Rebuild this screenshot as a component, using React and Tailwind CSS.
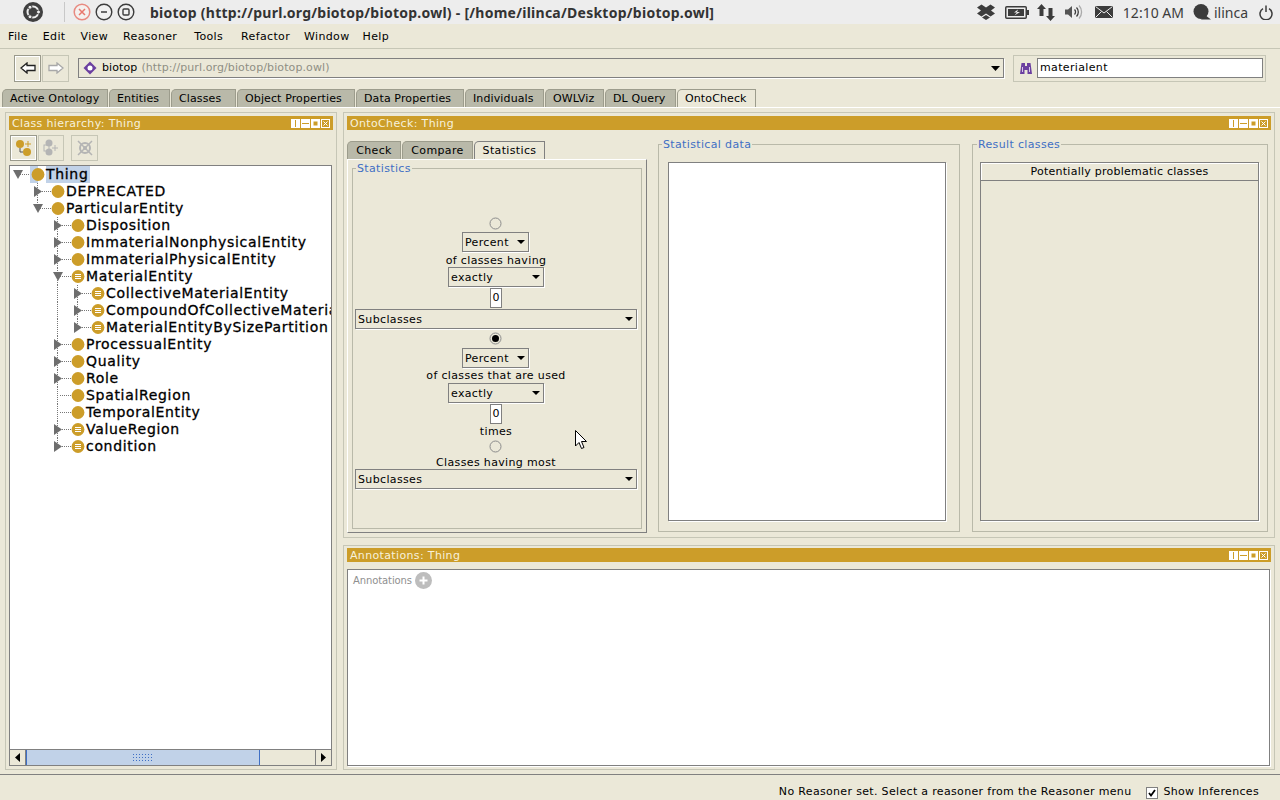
import React from 'react';

const MENUS = [
  { name: 'File', cls: '' },
  { name: 'Edit', cls: '' },
  { name: 'View', cls: '' },
  { name: 'Reasoner', cls: '' },
  { name: 'Tools', cls: 'ml-[2px]' },
  { name: 'Refactor', cls: 'ml-[3px]' },
  { name: 'Window', cls: '-ml-px' },
  { name: 'Help', cls: '-ml-[2px]' },
];

const TABS = [
  { name: 'Active Ontology', width: 'w-[106px]' },
  { name: 'Entities', width: 'w-[61px]' },
  { name: 'Classes', width: 'w-[65px]' },
  { name: 'Object Properties', width: 'w-[118px]' },
  { name: 'Data Properties', width: 'w-[108px]' },
  { name: 'Individuals', width: 'w-[79px]' },
  { name: 'OWLViz', width: 'w-[59px]' },
  { name: 'DL Query', width: 'w-[71px]' },
  { name: 'OntoCheck', width: 'w-[79px]', active: true },
];

// depth, arrow (down/right/none), defined class?, guides [x, half]
const TREE = [
  { name: 'Thing', d: 0, arrow: 'down', selected: true, guides: [] },
  { name: 'DEPRECATED', d: 1, arrow: 'right', guides: [[27]] },
  { name: 'ParticularEntity', d: 1, arrow: 'down', guides: [[27, true]] },
  { name: 'Disposition', d: 2, arrow: 'right', guides: [[47]] },
  { name: 'ImmaterialNonphysicalEntity', d: 2, arrow: 'right', guides: [[47]] },
  { name: 'ImmaterialPhysicalEntity', d: 2, arrow: 'right', guides: [[47]] },
  { name: 'MaterialEntity', d: 2, arrow: 'down', defined: true, guides: [[47]] },
  { name: 'CollectiveMaterialEntity', d: 3, arrow: 'right', defined: true, guides: [[47], [67]] },
  { name: 'CompoundOfCollectiveMaterialEntity', d: 3, arrow: 'right', defined: true, guides: [[47], [67]] },
  { name: 'MaterialEntityBySizePartition', d: 3, arrow: 'right', defined: true, guides: [[47], [67, true]] },
  { name: 'ProcessualEntity', d: 2, arrow: 'right', guides: [[47]] },
  { name: 'Quality', d: 2, arrow: 'right', guides: [[47]] },
  { name: 'Role', d: 2, arrow: 'right', guides: [[47]] },
  { name: 'SpatialRegion', d: 2, guides: [[47]] },
  { name: 'TemporalEntity', d: 2, guides: [[47]] },
  { name: 'ValueRegion', d: 2, arrow: 'right', defined: true, guides: [[47]] },
  { name: 'condition', d: 2, arrow: 'right', defined: true, guides: [[47, true]] },
];

function TreeRow({ row }) {
  const ax = 8 + 20 * row.d;
  const cx = 28 + 20 * row.d;
  return (
    <div className="flex h-[17px] items-center whitespace-nowrap">
      <svg width={36 + 20 * row.d} height="17" className="shrink-0">
        {row.guides.map(([x, half]) => (
          <line key={x} x1={x + 0.5} x2={x + 0.5} y1="0" y2={half ? 8 : 17} stroke="#777" strokeDasharray="1 1" />
        ))}
        <line x1={ax + 2} x2={cx - 5} y1="8.5" y2="8.5" stroke="#777" strokeDasharray="1 1" />
        {row.arrow === 'right' && <path d={`M${ax - 4} 3 L${ax + 4} 8.5 L${ax - 4} 14 Z`} fill="#6e6e6e" />}
        {row.arrow === 'down' && <path d={`M${ax - 5} 4 L${ax + 5} 4 L${ax} 13 Z`} fill="#6e6e6e" />}
        {row.selected && <rect x={cx - 8} y="0" width="8" height="17" fill="#c1d2e8" />}
        <circle cx={cx} cy="8.5" r="6.4" fill="#cc9d29" />
        {row.defined && <path d={`M${cx - 3} 6.5 H${cx + 3} M${cx - 3} 8.5 H${cx + 3} M${cx - 3} 10.5 H${cx + 3}`} stroke="#fff" strokeWidth="1" />}
      </svg>
      <span className={`h-[17px] text-[14px] leading-[16px] tracking-[0.68px] text-black [-webkit-text-stroke:0.3px_#000] ${row.selected ? 'bg-[#c1d2e8] pr-[2px]' : ''}`}>{row.name}</span>
    </div>
  );
}

function ViewHeader({ title }) {
  return (
    <div className="flex h-[14px] shrink-0 items-center justify-between bg-[#cc9d29] px-[3px] text-[11px] leading-[14px] tracking-[0.35px] text-[#f7f1dc]">
      <span className="pt-px">{title}</span>
      <div className="flex items-center gap-px">
        <svg width="9" height="9"><rect x="0" y="0" width="9" height="9" fill="#fff" /><path d="M4.5 1V8" stroke="#cc9d29" /></svg>
        <svg width="9" height="9"><rect x=".5" y=".5" width="8" height="8" fill="#fff" stroke="#fff" /><path d="M1 4.5H8" stroke="#cc9d29" /></svg>
        <svg width="9" height="9"><rect x=".5" y=".5" width="8" height="8" fill="#fff" stroke="#fff" /><rect x="2.5" y="2.5" width="4" height="4" fill="#cc9d29" /></svg>
        <svg width="9" height="9"><rect x=".5" y=".5" width="8" height="8" fill="none" stroke="#fff" /><path d="M2.5 2.5L6.5 6.5M6.5 2.5L2.5 6.5" stroke="#fff" /></svg>
      </div>
    </div>
  );
}

function Combo({ label, width, className = '' }) {
  return (
    <div className={`flex h-[20px] shrink-0 items-center justify-between border border-[#808080] pl-[2px] pr-[3px] text-[11px] tracking-[0.35px] text-black shadow-[1px_1px_0_#fff] ${width} ${className}`}>
      <span className="pt-[2px]">{label}</span>
      <svg width="8" height="4" className="shrink-0"><path d="M0 0H8L4 4Z" fill="#000" /></svg>
    </div>
  );
}

function Radio({ checked, className = '' }) {
  return (
    <svg width="13" height="13" className={`mr-[2px] shrink-0 ${className}`}>
      <circle cx="6.5" cy="6.5" r="5.5" fill="#ebe8d8" stroke="#8c8c8c" />
      {checked && <circle cx="6.5" cy="6.5" r="3.5" fill="#000" />}
    </svg>
  );
}

function NumberBox({ className = '' }) {
  return <div className={`flex h-[20px] w-[12px] shrink-0 items-center justify-center border border-[#808080] bg-white text-[11px] text-black ${className}`}>0</div>;
}

function Caption({ children, className = '' }) {
  return <div className={`shrink-0 text-[11px] leading-[13px] tracking-[0.35px] text-black ${className}`}>{children}</div>;
}

function GroupBox({ title, className = '', legendClass = 'ml-[3px]', children }) {
  return (
    <fieldset className={`min-w-0 border border-[#b9b9a9] ${className}`}>
      <legend className={`px-px text-[11px] leading-[13px] tracking-[0.35px] text-[#3f6fc4] ${legendClass}`}>{title}</legend>
      {children}
    </fieldset>
  );
}

function ToolButton({ active, className = '', children }) {
  return (
    <div className={`flex items-center justify-center border ${active ? 'border-[#9a9a8c] shadow-[inset_0_0_0_1px_#fff]' : 'border-[#c6c6b6]'} ${className}`}>
      {children}
    </div>
  );
}

function TopBar() {
  return (
    <div className="flex h-[24px] shrink-0 items-center bg-[#ededed] font-['Noto_Sans',sans-serif] text-[#3c3c3c]">
      <svg width="20" height="20" viewBox="0 0 20 20" className="ml-[23px] shrink-0">
        <circle cx="10" cy="10" r="10" fill="#3f3f3f" />
        <circle cx="10" cy="10" r="5.5" fill="none" stroke="#ededed" strokeWidth="2" />
        <circle cx="15.5" cy="10" r="2" fill="#ededed" stroke="#3f3f3f" />
        <circle cx="7" cy="5.2" r="2" fill="#ededed" stroke="#3f3f3f" />
        <circle cx="7" cy="14.8" r="2" fill="#ededed" stroke="#3f3f3f" />
      </svg>
      <div className="ml-[21px] h-[20px] w-px shrink-0 bg-[#c8c8c8]" />
      <svg width="18" height="18" viewBox="0 0 18 18" className="ml-[8px] shrink-0">
        <circle cx="9" cy="9" r="7.8" fill="#f4f0ee" stroke="#e88a80" strokeWidth="1.5" />
        <path d="M6 6L12 12M12 6L6 12" stroke="#e8776c" strokeWidth="1.5" />
      </svg>
      <svg width="18" height="18" viewBox="0 0 18 18" className="ml-[4px] shrink-0">
        <circle cx="9" cy="9" r="7.8" fill="#f0f0f0" stroke="#3c3c3c" strokeWidth="1.4" />
        <path d="M6 9H12" stroke="#3c3c3c" strokeWidth="1.5" />
      </svg>
      <svg width="18" height="18" viewBox="0 0 18 18" className="ml-[4px] shrink-0">
        <circle cx="9" cy="9" r="7.8" fill="#f0f0f0" stroke="#3c3c3c" strokeWidth="1.4" />
        <rect x="6" y="6" width="6" height="6" rx="1" fill="none" stroke="#3c3c3c" strokeWidth="1.4" />
      </svg>
      <span className="ml-[15px] whitespace-nowrap text-[14px] font-bold tracking-[0.25px] text-[#333]">biotop (http://purl.org/biotop/biotop.owl) - [/home/ilinca/Desktop/biotop.owl]</span>
      <div className="ml-auto flex items-center pr-[7px]">
        <svg width="18" height="16" viewBox="0 0 18 16"><path d="M4.5 0.5L9 3.5L13.5 0.5L18 3.5L14 6.5L18 9.5L13.5 12.5L9 9.5L4.5 12.5L0 9.5L4 6.5L0 3.5ZM5 13.5L9 11L13 13.5L9 16Z" fill="#3c3c3c" /></svg>
        <svg width="24" height="13" viewBox="0 0 24 13" className="ml-[10px]"><rect x=".75" y=".75" width="20.5" height="11.5" rx="1" fill="#ededed" stroke="#3c3c3c" strokeWidth="1.5" /><rect x="3" y="3" width="16" height="7" fill="#3c3c3c" /><rect x="22" y="4" width="2" height="5" fill="#3c3c3c" /><path d="M13 3.5L9 6.5H12L9.5 9.5L15 6H12Z" fill="#ededed" /></svg>
        <svg width="18" height="17" viewBox="0 0 18 17" className="ml-[8px]"><path d="M4.5 0L9 5H6.5V12H2.5V5H0Z" fill="#3c3c3c" /><path d="M13.5 17L9 12H11.5V4H15.5V12H18Z" fill="#3c3c3c" /></svg>
        <svg width="20" height="16" viewBox="0 0 20 16" className="ml-[10px]"><path d="M0 5.5H3L7 2V14L3 10.5H0Z" fill="#555" /><path d="M9.5 5.5A3.5 3.5 0 0 1 9.5 10.5M11.5 3.5A6.5 6.5 0 0 1 11.5 12.5" fill="none" stroke="#3c3c3c" strokeWidth="1.3" /><path d="M14 1.5A9.5 9.5 0 0 1 14 14.5" fill="none" stroke="#aaa" strokeWidth="1.3" /></svg>
        <svg width="18" height="12" viewBox="0 0 18 12" className="ml-[10px]"><rect width="18" height="12" fill="#3c3c3c" /><path d="M0.5 0.5L9 7L17.5 0.5M0.5 11.5L6.5 5.5M17.5 11.5L11.5 5.5" fill="none" stroke="#ededed" /></svg>
        <span className="ml-[10px] whitespace-nowrap text-[14px]">12:10 AM</span>
        <svg width="19" height="16" viewBox="0 0 19 16" className="ml-[8px]"><circle cx="9" cy="7.5" r="7.5" fill="#3c3c3c" /><path d="M13 11L19 15.5H9Z" fill="#3c3c3c" /></svg>
        <span className="ml-[3px] text-[14px]">ilinca</span>
        <svg width="14" height="15" viewBox="0 0 14 15" className="ml-[11px]"><path d="M4 3.6A6 6 0 1 0 10 3.6" fill="none" stroke="#3c3c3c" strokeWidth="1.5" /><path d="M7 0.5V7" stroke="#3c3c3c" strokeWidth="1.5" /></svg>
      </div>
    </div>
  );
}

export default function App() {
  return (
    <div className="relative flex h-[800px] w-[1280px] flex-col overflow-hidden bg-[#ebe8d8] font-['DejaVu_Sans',sans-serif] text-black">
      <TopBar />

      {/* menu */}
      <div className="flex h-[25px] shrink-0 items-center gap-[15px] border-b border-[#c6c6b6] pl-[8px] pt-[3px] text-[11px] tracking-[0.35px]">
        {MENUS.map((m) => <span key={m.name} className={m.cls}>{m.name}</span>)}
      </div>

      {/* toolbar */}
      <div className="flex h-[40px] shrink-0 items-center pl-[14px] pb-[2px]">
        <ToolButton active className="h-[27px] w-[27px]">
          <svg width="16" height="12" viewBox="0 0 16 12"><path d="M1 6L7 1V3.5H15V8.5H7V11Z" fill="#fff" stroke="#222" strokeWidth="1.3" /></svg>
        </ToolButton>
        <ToolButton className="ml-px h-[27px] w-[27px]">
          <svg width="16" height="12" viewBox="0 0 16 12"><path d="M15 6L9 1V3.5H1V8.5H9V11Z" fill="#fff" stroke="#a8a8a8" strokeWidth="1.3" /></svg>
        </ToolButton>
        <div className="ml-[9px] flex h-[20px] w-[926px] items-center border border-[#808080] pl-[4px] pr-[3px] text-[11px] tracking-[0.1px] shadow-[1px_1px_0_#fff]">
          <svg width="14" height="14" viewBox="0 0 14 14" className="shrink-0"><path d="M7 0.5L13.5 7L7 13.5L0.5 7Z" fill="#6b3fa0" /><circle cx="7" cy="7" r="2.5" fill="#fff" /></svg>
          <span className="ml-[5px]">biotop</span>
          <span className="ml-[4px] text-[#8f8f84]">(http://purl.org/biotop/biotop.owl)</span>
          <svg width="9" height="5" className="ml-auto"><path d="M0 0H9L4.5 5Z" fill="#000" /></svg>
        </div>
        <div className="ml-[9px] flex h-[27px] w-[253px] items-center border border-[#c6c6b6] pl-[6px]">
          <svg width="12" height="13" viewBox="0 0 12 13" className="shrink-0"><path d="M1.5 1H5V4H7V1H10.5L12 12H7.5V8H4.5V12H0Z" fill="#6b3fa0" /><path d="M2.5 5V10M9.5 5V10" stroke="#d8c8e8" /></svg>
          <div className="ml-[5px] flex h-[20px] w-[226px] items-center border border-[#808080] bg-white pl-[2px] text-[11px] tracking-[0.35px]">materialent</div>
        </div>
      </div>

      {/* workspace tabs */}
      <div className="flex h-[18px] shrink-0 items-end gap-px pl-[2px]">
        {TABS.map((t) => (
          <div
            key={t.name}
            className={`flex h-[18px] items-center rounded-tl-[5px] border border-b-0 pt-px pl-[7px] text-[11px] tracking-[0.12px] ${t.width} ${t.active ? 'border-[#9c9c8c] bg-[#ebe8d8]' : 'border-[#9c9c8c] bg-[#b9b9a9]'}`}
          >
            {t.name}
          </div>
        ))}
      </div>

      {/* main area */}
      <div className="flex h-[668px] shrink-0 gap-[6px] border-t border-b border-t-white border-b-[#808080] px-[5px] pt-[4px] pb-[4px]">
        {/* class hierarchy */}
        <div className="flex w-[332px] shrink-0 flex-col border border-[#c6c6b6] p-[3px]">
          <ViewHeader title="Class hierarchy: Thing" />
          <div className="mt-[5px] flex h-[26px] shrink-0 pl-px">
            <ToolButton active className="h-[26px] w-[27px]">
              <svg width="18" height="18" viewBox="0 0 18 18"><circle cx="5" cy="5" r="4" fill="#cc9d29" /><circle cx="12" cy="13" r="4" fill="#cc9d29" /><path d="M5 9V13H8" fill="none" stroke="#555" /><path d="M13 2V8M10 5H16" stroke="#cc9d29" /></svg>
            </ToolButton>
            <ToolButton className="ml-px h-[26px] w-[26px]">
              <svg width="18" height="18" viewBox="0 0 18 18"><circle cx="7" cy="4" r="3.5" fill="#b4b4b4" /><circle cx="7" cy="13" r="3.5" fill="#b4b4b4" /><rect x="2" y="6" width="5" height="6" fill="none" stroke="#b4b4b4" /><path d="M13 6V12M10 9H16" stroke="#b4b4b4" /></svg>
            </ToolButton>
            <ToolButton className="ml-[7px] h-[26px] w-[27px]">
              <svg width="18" height="18" viewBox="0 0 18 18"><circle cx="9" cy="9" r="5" fill="none" stroke="#b4b4b4" strokeWidth="2" /><circle cx="9" cy="9" r="2" fill="#b4b4b4" /><path d="M2 2L16 16M16 2L2 16" stroke="#b4b4b4" strokeWidth="1.5" /></svg>
            </ToolButton>
          </div>
          <div className="mt-[4px] mr-px flex min-h-0 flex-1 flex-col border border-[#808080] bg-white">
            <div className="min-h-0 flex-1 overflow-hidden">
              {TREE.map((row) => <TreeRow key={row.name} row={row} />)}
            </div>
            <div className="flex h-[16px] shrink-0 border-t border-[#808080] bg-[#ebe8d8]">
              <div className="flex w-[16px] items-center justify-center border-r border-[#808080]">
                <svg width="5" height="9"><path d="M5 0V9L0 4.5Z" fill="#000" /></svg>
              </div>
              <div className="flex w-[234px] items-center justify-center border border-t-0 border-b-0 border-[#3f6fc4] bg-[#c1d2e8]">
                <div className="h-[9px] w-[22px] bg-[radial-gradient(#3f6fc4_30%,transparent_35%)] bg-[length:3px_3px]" />
              </div>
              <div className="flex-1" />
              <div className="flex w-[16px] items-center justify-center border-l border-[#808080]">
                <svg width="5" height="9"><path d="M0 0V9L5 4.5Z" fill="#000" /></svg>
              </div>
            </div>
          </div>
        </div>

        {/* right column */}
        <div className="flex min-w-0 flex-1 flex-col gap-[7px]">
          <div className="flex h-[426px] shrink-0 flex-col border border-[#c6c6b6] p-[3px]">
            <ViewHeader title="OntoCheck: Thing" />
            <div className="flex min-h-0 flex-1">
              {/* statistics tab */}
              <div className="mt-[11px] flex w-[300px] shrink-0 flex-col pb-px">
                <div className="flex h-[18px] shrink-0 items-end gap-px">
                  <div className="flex h-[18px] w-[54px] items-center justify-center rounded-tl-[5px] border border-b-0 border-[#9c9c8c] bg-[#b9b9a9] pt-px text-[11px] tracking-[0.35px]">Check</div>
                  <div className="flex h-[18px] w-[71px] items-center justify-center rounded-tl-[5px] border border-b-0 border-[#9c9c8c] bg-[#b9b9a9] pt-px text-[11px] tracking-[0.35px]">Compare</div>
                  <div className="flex h-[18px] w-[71px] items-center justify-center rounded-tl-[5px] border border-b-0 border-[#808080] pt-px text-[11px] tracking-[0.35px]">Statistics</div>
                </div>
                <div className="min-h-0 flex-1 border border-t-white border-l-white border-r-[#808080] border-b-[#808080] pt-[2px] pr-[4px] pb-[3px] pl-[4px]">
                  <GroupBox title="Statistics" className="flex h-full flex-col">
                    <div className="flex flex-col items-center pt-[42px] pl-[2px] pr-[4px]">
                      <Radio />
                      <Combo label="Percent" width="w-[67px]" className="mt-[2px] mr-px" />
                      <Caption className="mt-[2px] h-[13px]">of classes having</Caption>
                      <Combo label="exactly" width="w-[96px]" />
                      <NumberBox className="mt-px" />
                      <Combo label="Subclasses" width="w-[282px]" className="mt-px" />
                      <Radio checked className="mt-[3px]" />
                      <Combo label="Percent" width="w-[67px]" className="mt-[3px] mr-px" />
                      <Caption className="mt-px h-[14px]">of classes that are used</Caption>
                      <Combo label="exactly" width="w-[96px]" />
                      <NumberBox className="mt-px" />
                      <Caption className="mt-px h-[14px]">times</Caption>
                      <Radio className="mt-[1px]" />
                      <Caption className="mt-[3px] h-[13px]">Classes having most</Caption>
                      <Combo label="Subclasses" width="w-[282px]" />
                    </div>
                  </GroupBox>
                </div>
              </div>

              {/* statistical data */}
              <div className="ml-[11px] flex w-[302px] shrink-0 pt-[8px] pb-[2px]">
                <GroupBox title="Statistical data" className="h-full w-full">
                  <div className="h-full pt-[11px] pr-[13px] pb-[10px] pl-[9px]">
                    <div className="h-full border border-[#808080] bg-white shadow-[1px_1px_0_#fff]" />
                  </div>
                </GroupBox>
              </div>

              {/* result classes */}
              <div className="ml-[12px] flex w-[296px] shrink-0 pt-[8px] pb-[2px]">
                <GroupBox title="Result classes" className="h-full w-full" legendClass="ml-[4px]">
                  <div className="h-full pt-[11px] pr-[8px] pb-[10px] pl-[7px]">
                    <div className="h-full border border-[#808080] shadow-[1px_1px_0_#fff]">
                      <div className="flex h-[18px] items-center justify-center border-b border-[#808080] pt-px text-[11px] tracking-[0.25px] shadow-[inset_1px_1px_0_#fff]">Potentially problematic classes</div>
                    </div>
                  </div>
                </GroupBox>
              </div>
            </div>
          </div>

          {/* annotations */}
          <div className="flex min-h-0 flex-1 flex-col border border-[#c6c6b6] p-[3px] pt-[2px]">
            <ViewHeader title="Annotations: Thing" />
            <div className="mt-[7px] mr-px min-h-0 flex-1 border border-[#808080] bg-white shadow-[1px_1px_0_#fff]">
              <div className="flex items-center pt-[2px] pl-[5px]">
                <span className="text-[10px] tracking-[-0.1px] text-[#8f8f8f]">Annotations</span>
                <svg width="17" height="17" viewBox="0 0 17 17" className="ml-[3px]"><circle cx="8.5" cy="8.5" r="8.5" fill="#bdbdbd" /><path d="M8.5 4.5V12.5M4.5 8.5H12.5" stroke="#fff" strokeWidth="2" /></svg>
              </div>
            </div>
          </div>
        </div>
      </div>

      {/* status bar */}
      <div className="flex min-h-0 flex-1 items-center justify-end pr-[21px] pt-[10px] text-[11px] tracking-[0.33px]">
        <span>No Reasoner set. Select a reasoner from the Reasoner menu</span>
        <div className="ml-[15px] flex h-[12px] w-[12px] items-center justify-center border border-[#808080] bg-white">
          <svg width="8" height="8" viewBox="0 0 8 8"><path d="M1 4L3 6.5L7 1" fill="none" stroke="#000" strokeWidth="1.8" /></svg>
        </div>
        <span className="ml-[5px]">Show Inferences</span>
      </div>

      {/* mouse pointer */}
      <svg width="13" height="20" viewBox="0 0 13 20" className="absolute left-[575px] top-[430px]">
        <path d="M0.5 0.5V16L4 12.5L6.5 18.5L9 17.5L6.5 11.5H11.5Z" fill="#fff" stroke="#000" />
      </svg>
    </div>
  );
}
